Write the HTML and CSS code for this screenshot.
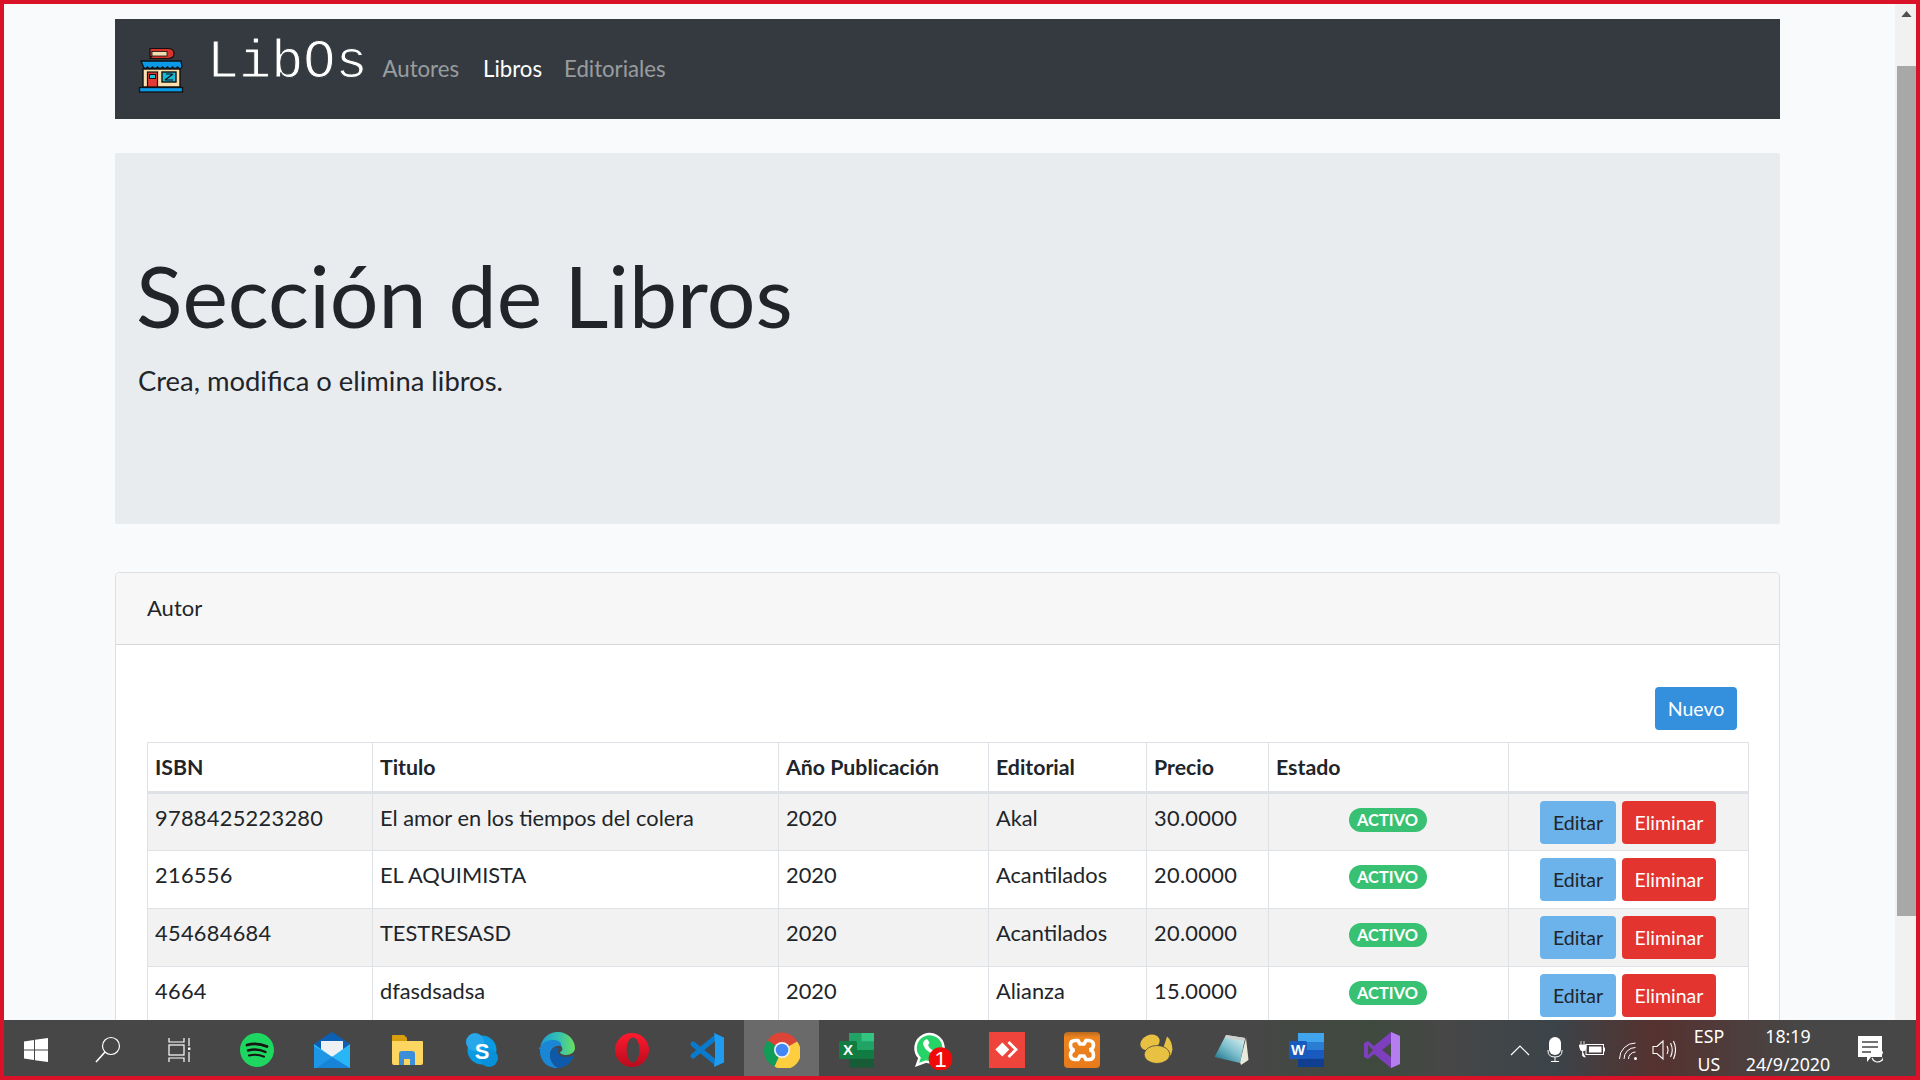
FILE: index.html
```html
<!DOCTYPE html>
<html lang="es">
<head>
<meta charset="utf-8">
<title>LibOs</title>
<link rel="stylesheet" href="styles.css">
</head>
<body>
<div class="screen">
  <div class="browser">
    <main class="page">
      <nav class="navbar">
        <svg class="logo" viewBox="0 0 46 46">
          <path d="M12 1.500h18q6 0 6 5t-6 5H12l1.500-2H12z" fill="#d8342c" stroke="#111" stroke-width="1.200"/>
          <rect x="14" y="4.500" width="15" height="4.500" fill="#f5deb3" stroke="#111" stroke-width=".8"/>
          <rect x="5" y="22" width="37" height="18" fill="#fbe0ae" stroke="#111" stroke-width="1.400"/>
          <path d="M3 14h40l1 6q-2 3-4.500 0q-2.500 3-5 0q-2.500 3-5 0q-2.500 3-5 0q-2.500 3-5 0q-2.500 3-5 0q-2.500 3-5 0q-2.500 3-4 0z" fill="#0a9ae8" stroke="#111" stroke-width="1.300"/>
          <rect x="9.500" y="25" width="10" height="15" fill="#e53935" stroke="#111" stroke-width="1.200"/>
          <rect x="11.500" y="27.500" width="6" height="4" fill="#1ec3d8" stroke="#111"/>
          <rect x="24" y="25" width="14" height="10" fill="#19b8d6" stroke="#111" stroke-width="1.400"/>
          <path d="M27 33l8-6M28 27h6M27 33h8" stroke="#111" stroke-width="1.200" fill="none"/>
          <rect x="1.500" y="40.500" width="43" height="4.500" fill="#0a9ae8" stroke="#111" stroke-width="1.300"/>
        </svg>
        <a class="brand">LibOs</a>
        <a class="nav-link">Autores</a>
        <a class="nav-link active">Libros</a>
        <a class="nav-link">Editoriales</a>
      </nav>

      <section class="jumbotron">
        <h1 class="display">Sección de Libros</h1>
        <p class="lead">Crea, modifica o elimina libros.</p>
      </section>

      <section class="card">
        <header class="card-header">Autor</header>
        <div class="card-body">
          <div class="actions"><button class="btn btn-primary">Nuevo</button></div>
          <table class="table">
            <colgroup>
              <col class="c1"><col class="c2"><col class="c3"><col class="c4"><col class="c5"><col class="c6"><col class="c7">
            </colgroup>
            <thead>
              <tr><th>ISBN</th><th>Titulo</th><th>Año Publicación</th><th>Editorial</th><th>Precio</th><th>Estado</th><th></th></tr>
            </thead>
            <tbody>
              <tr>
                <td class="num">9788425223280</td><td>El amor en los tiempos del colera</td><td>2020</td><td>Akal</td><td class="num">30.0000</td>
                <td class="center"><span class="badge">ACTIVO</span></td>
                <td class="ops"><button class="btn btn-info">Editar</button><button class="btn btn-danger">Eliminar</button></td>
              </tr>
              <tr>
                <td class="num">216556</td><td>EL AQUIMISTA</td><td>2020</td><td>Acantilados</td><td class="num">20.0000</td>
                <td class="center"><span class="badge">ACTIVO</span></td>
                <td class="ops"><button class="btn btn-info">Editar</button><button class="btn btn-danger">Eliminar</button></td>
              </tr>
              <tr>
                <td class="num">454684684</td><td>TESTRESASD</td><td>2020</td><td>Acantilados</td><td class="num">20.0000</td>
                <td class="center"><span class="badge">ACTIVO</span></td>
                <td class="ops"><button class="btn btn-info">Editar</button><button class="btn btn-danger">Eliminar</button></td>
              </tr>
              <tr>
                <td class="num">4664</td><td>dfasdsadsa</td><td>2020</td><td>Alianza</td><td class="num">15.0000</td>
                <td class="center"><span class="badge">ACTIVO</span></td>
                <td class="ops"><button class="btn btn-info">Editar</button><button class="btn btn-danger">Eliminar</button></td>
              </tr>
            </tbody>
          </table>
        </div>
      </section>
    </main>
    <aside class="scrollbar">
      <svg class="scroll-arrow" viewBox="0 0 12 7"><path d="M6 0l6 7H0z" fill="#505050"/></svg>
      <div class="scroll-thumb"></div>
    </aside>
  </div>

  <footer class="taskbar">
    <div class="slot slot-start">
      <svg class="ic" viewBox="0 0 36 36"><path d="M6 9.500l10-1.500v9.500H6zM17 7.800L30 6v11.500H17zM6 18.500h10V28L6 26.500zM17 18.500h13V30l-13-1.800z" fill="#fff"/></svg>
    </div>
    <div class="slot slot-sys">
      <svg class="ic" viewBox="0 0 36 36"><circle cx="21" cy="14" r="8.500" fill="none" stroke="#fff" stroke-width="1.200"/><path d="M15 20L6 30" stroke="#fff" stroke-width="1.600"/></svg>
    </div>
    <div class="slot slot-sys">
      <svg class="ic" viewBox="0 0 36 36" fill="none" stroke="#fff" stroke-width="1.200"><path d="M7 6v4h15V6M7 30v-4h15v4"/><rect x="7" y="13" width="15" height="10"/><path d="M27 6v8M27 20v10"/><rect x="26" y="15.500" width="2.400" height="2.400" fill="#fff" stroke="none"/></svg>
    </div>
    <div class="apps">
      <div class="slot"><svg class="ic" viewBox="0 0 36 36"><circle cx="18" cy="18" r="17" fill="#1ed760"/><g fill="none" stroke="#191414" stroke-linecap="round"><path d="M8 13q10-3 20 1.500" stroke-width="2.800"/><path d="M9 18.500q9-2.500 17.500 1.500" stroke-width="2.400"/><path d="M10 23.500q8-2 15 1.200" stroke-width="2"/></g></svg></div>
      <div class="slot"><svg class="ic" viewBox="0 0 36 36"><path d="M18 0L36 12v6H0v-6z" fill="#0b5fb5"/><path d="M7 9h22v11L18 25 7 20z" fill="#eef1f4"/><path d="M0 12l18 13 18-13v24H0z" fill="#29b6f6"/><path d="M0 14l18 11L2 36H0z" fill="#1e96e6"/><path d="M18 25l18 11H2z" fill="#1784d8"/></svg></div>
      <div class="slot"><svg class="ic" viewBox="0 0 36 36"><path d="M3 4q0-1 1-1h11l3 3v5H3z" fill="#d99e0b"/><path d="M3 9h30q1 0 1 1v21q0 2-2 2H5q-2 0-2-2z" fill="#fcd661"/><path d="M10 22q0-3 3-3h10q3 0 3 3v11h-5v-6h-6v6h-5z" fill="#3a8fd8"/></svg></div>
      <div class="slot"><svg class="ic" viewBox="0 0 36 36"><circle cx="18" cy="18" r="14.500" fill="#0a9be3"/><circle cx="11" cy="10" r="9" fill="#28a8ea"/><circle cx="25" cy="26" r="9" fill="#0691da"/><text x="18" y="27" class="glyph-s">S</text></svg></div>
      <div class="slot">
        <svg class="ic" viewBox="0 0 36 36">
          <defs><linearGradient id="edgeTop" x1="0" x2="1" y1="0" y2="0"><stop offset="0" stop-color="#1c9bd8"/><stop offset=".55" stop-color="#35c1b0"/><stop offset="1" stop-color="#6adf5f"/></linearGradient></defs>
          <path d="M1 17C2 7 9 0 19 0c10 0 17 8 17 16 0 4-4 7-9 7-3 0-6-1-6-3 3-1 3-4 1-6-4-4-13-4-18-1-2 1-4 2-4 4z" fill="url(#edgeTop)"/>
          <path d="M1 17C2 11 8 8 14 8c6 0 9 3 8 6-6-1-11 3-11 9 0 5 3 10 8 13C9 37 0 29 1 17z" fill="#1a86d6"/>
          <path d="M11 23c0-5 5-8 9-7-3 4 0 9 7 9 2 0 6-1 8-2-2 8-9 13-16 13-5-3-8-8-8-13z" fill="#0f5aa8"/>
        </svg>
      </div>
      <div class="slot">
        <svg class="ic" viewBox="0 0 36 36">
          <defs><linearGradient id="operaG" x1="0" x2="0" y1="0" y2="1"><stop offset="0" stop-color="#ff1b2d"/><stop offset="1" stop-color="#b80b1e"/></linearGradient></defs>
          <ellipse cx="18" cy="18" rx="17" ry="17" fill="url(#operaG)"/>
          <ellipse cx="19" cy="18" rx="6.500" ry="12.500" fill="#474747"/>
        </svg>
      </div>
      <div class="slot">
        <svg class="ic" viewBox="0 0 36 36">
          <path d="M4 12l22 18M4 24L26 6" fill="none" stroke="#0a7acc" stroke-width="5" stroke-linecap="round"/>
          <path d="M25 1l10 4.500v25L25 35l1-9V10z" fill="#1f9cf0"/>
        </svg>
      </div>
      <div class="slot active"><svg class="ic" viewBox="0 0 36 36"><path d="M18 18L3.500 8.500A17 17 0 0 1 33 9.500z" fill="#db4437"/><path d="M18 18l-7.500 16.500A17 17 0 0 1 3.500 8.500z" fill="#0f9d58"/><path d="M18 18L33 9.500A17 17 0 0 1 10.500 34.500z" fill="#ffcd40"/><circle cx="18" cy="18" r="8" fill="#f1f1f1"/><circle cx="18" cy="18" r="6.300" fill="#4285f4"/></svg></div>
      <div class="slot"><svg class="ic" viewBox="0 0 36 36"><path d="M10 1h23q2 0 2 2v30q0 2-2 2H12q-2 0-2-2z" fill="#21a366"/><rect x="10" y="1" width="12.500" height="17" fill="#21a366"/><rect x="22.500" y="1" width="12.500" height="8.500" fill="#33c481"/><rect x="22.500" y="9.500" width="12.500" height="8.500" fill="#21a366"/><rect x="10" y="18" width="25" height="8.500" fill="#107c41"/><rect x="10" y="26.500" width="25" height="9" fill="#185c37"/><rect x="0" y="9" width="18" height="18" rx="1.500" fill="#107c41"/><text x="9" y="23" class="glyph-x">X</text></svg></div>
      <div class="slot">
        <svg class="ic wa" viewBox="0 0 44 40">
          <path d="M3 35l2.500-7.200A14 14 0 1 1 12 31.600z" fill="#25d366" stroke="#fff" stroke-width="2.500"/>
          <path d="M11 10q2-1.500 3 0l1.500 3-1.500 2q1.500 4 5.500 5.500l2-1.500 3 1.500q.5 2-1 3-3 2-7.500-1-6-3.500-7-9 0-2 2-3.500z" fill="#fff"/>
          <circle cx="26.500" cy="29" r="11.800" fill="#f00a0a"/>
          <text x="26.500" y="36.500" class="glyph-one">1</text>
        </svg>
      </div>
      <div class="slot"><svg class="ic" viewBox="0 0 36 36"><rect width="36" height="36" fill="#ef443b"/><path d="M13.300 10.500l7 7-7 7-7-7z" fill="#fff"/><path d="M20.500 9L29 17.500 20.500 26l-2-2 6.500-6.500-6.500-6.500z" fill="#fff"/></svg></div>
      <div class="slot">
        <svg class="ic" viewBox="0 0 36 36">
          <defs><linearGradient id="xamppG" x1="0" x2="0" y1="0" y2="1"><stop offset="0" stop-color="#b9691f"/><stop offset=".15" stop-color="#ee8420"/><stop offset="1" stop-color="#e87a1a"/></linearGradient></defs>
          <rect width="36" height="36" rx="4" fill="url(#xamppG)"/>
          <path d="M14 8.500H11Q6.500 8.500 6.500 13T10.500 18Q6.500 19 6.500 23T11 27.500h3l2-3.500h4l2 3.500h3Q29.500 27.500 29.500 23T25.500 18Q29.500 17 29.500 13T25 8.500h-3L20 12h-4z" fill="none" stroke="#fff" stroke-width="3.600"/>
        </svg>
      </div>
      <div class="slot">
        <svg class="ic" viewBox="0 0 36 36">
          <ellipse cx="11" cy="10.500" rx="10" ry="7.500" fill="#e8c142" transform="rotate(-25 11 10.500)"/>
          <path d="M24 17L28 4.500q5 4 5.500 13-1 5-3 7.500-1-6-6.500-8z" fill="#e8c142"/>
          <ellipse cx="18" cy="22.500" rx="12.800" ry="9" fill="#e8c142" stroke="#474747" stroke-width=".8"/>
        </svg>
      </div>
      <div class="slot">
        <svg class="ic" viewBox="0 0 36 36">
          <defs><linearGradient id="padG" x1=".9" x2=".1" y1="0" y2="1"><stop offset="0" stop-color="#e2f4f6"/><stop offset=".5" stop-color="#7fc0cd"/><stop offset="1" stop-color="#17718a"/></linearGradient></defs>
          <path d="M32 6l2.500 22-7.500 5-1-3z" fill="#e9e9dc"/>
          <path d="M12 3l19 3-5 25L.5 25z" fill="url(#padG)"/>
          <path d="M12 3l19 3-.7 3-19.300-3z" fill="#cfcfcf"/>
        </svg>
      </div>
      <div class="slot"><svg class="ic" viewBox="0 0 36 36"><rect x="9" y="1" width="26" height="34" rx="2" fill="#2b7cd3"/><rect x="9" y="1" width="26" height="9" fill="#41a5ee"/><rect x="9" y="18" width="26" height="8.500" fill="#185abd"/><rect x="9" y="26.500" width="26" height="8.500" fill="#103f91"/><rect x="0" y="9" width="18" height="18" rx="1.500" fill="#185abd"/><text x="9" y="23" class="glyph-x">W</text></svg></div>
      <div class="slot"><svg class="ic" viewBox="0 0 36 36"><path d="M27 0l9 4v28l-9 4-17-14-6 5-4-2V11l4-2 6 5z" fill="#7e3fbf"/><path d="M27 0l9 4v28l-9 4z" fill="#b47ef0"/><path d="M27 11l-9 7 9 7zM4 13v10l5-5z" fill="#454a45"/></svg></div>
    </div>
    <div class="tray">
      <div class="t t-chev"><svg class="tray-ic" viewBox="0 0 24 24"><path d="M3 17l9-9 9 9" fill="none" stroke="#fff" stroke-width="1.200"/></svg></div>
      <div class="t t-mic"><svg class="mic" viewBox="0 0 16 26"><rect x="2" y="0" width="12" height="18" rx="6" fill="#fff"/><path d="M1 13v1q0 6 7 6t7-6v-1M8 20v4M4 24.500h8" fill="none" stroke="#fff" stroke-width="1"/></svg></div>
      <div class="t t-bat"><svg class="bat" viewBox="0 0 26 20"><path d="M2 1v4M5 1v4M0 5h7v3q0 3-3 3t-3-3zM3.500 11v4q0 2 3 2" fill="#fff" stroke="#fff" stroke-width=".8"/><rect x="7" y="4.500" width="17.500" height="10" fill="none" stroke="#fff"/><rect x="10" y="6.500" width="12.500" height="6" fill="#fff"/><rect x="25" y="7.500" width="1" height="4" fill="#fff"/></svg></div>
      <div class="t t-wifi"><svg class="tray-ic" viewBox="0 0 24 24" fill="none" stroke="#fff" stroke-width="1"><path d="M2.500 21A16 16 0 0 1 18.500 5"/><path d="M7 21A11.500 11.500 0 0 1 18.500 9.500"/><path d="M11.500 21A7 7 0 0 1 18.500 14"/><circle cx="18.500" cy="20.500" r="1.500" fill="#fff" stroke="none"/></svg></div>
      <div class="t t-vol"><svg class="tray-ic" viewBox="0 0 24 24" fill="none" stroke="#fff" stroke-width="1.100"><path d="M1 8.500h4l6-5.500v18l-6-5.500H1z"/><path d="M15 8q2 4 0 8M18.500 5q3.500 7 0 14M21.500 3q4 9 0 18"/></svg></div>
      <div class="t t-lang"><span>ESP</span><span>US</span></div>
      <div class="t t-clock"><span>18:19</span><span>24/9/2020</span></div>
      <div class="t t-notif"><svg class="notif" viewBox="0 0 26 30"><path d="M1 1h24v21H14l-4 5v-5H1z" fill="#fff"/><path d="M5 7h16M5 12h16M5 17h9" stroke="#454545" stroke-width="1.500"/><path d="M15 23a6 6 0 1 0 9-7" fill="none" stroke="#fff" stroke-width="1.200"/></svg></div>
    </div>
  </footer>
</div>
</body>
</html>
```

FILE: styles.css
```css
* { box-sizing: border-box; }

html, body {
  margin: 0;
  height: 100%;
  overflow: hidden;
}

body {
  font-family: "Lato", "Noto Sans", sans-serif;
  font-size: 21.800px;
  color: #212529;
}

.screen {
  width: 1920px;
  height: 1080px;
  border: 4px solid #da1228;
  display: flex;
  flex-direction: column;
}

.browser {
  flex: 1;
  min-height: 0;
  display: flex;
  overflow: hidden;
  background: #f8fafc;
}

.page {
  flex: 1;
  min-width: 0;
  padding: 15px 0 0 111px;
}

.scrollbar {
  width: 21px;
  background: #f1f1f1;
  display: flex;
  flex-direction: column;
  align-items: center;
  padding: 7px 0 0 2px;
}

.scroll-arrow {
  width: 11px;
  height: 6px;
}

.scroll-thumb {
  width: 19px;
  height: 850px;
  margin-top: 49px;
  background: #a8a8a8;
}

/* navbar */
.navbar {
  width: 1665px;
  height: 100px;
  background: #343a40;
  display: flex;
  align-items: center;
  padding-left: 23px;
}

.logo {
  width: 46px;
  height: 46px;
  margin-top: 2px;
}

.brand {
  font-family: "Liberation Mono", monospace;
  font-size: 53.500px;
  color: #fff;
  -webkit-text-stroke: 1px #343a40;
  margin-left: 23px;
  margin-top: -13px;
}

.nav-link {
  color: rgba(255, 255, 255, .5);
  font-size: 22.200px;
  margin-left: 15px;
  margin-top: -2px;
}

.nav-link.active {
  color: #fff;
  margin-left: 24px;
  margin-right: 7px;
}

/* jumbotron */
.jumbotron {
  width: 1665px;
  height: 371px;
  margin-top: 34px;
  background: #e9ecef;
  padding: 90px 23px 0;
  border-radius: 2px;
}

.display {
  margin: 0 0 0 -2px;
  font-size: 86px;
  font-weight: 400;
  line-height: 104px;
  color: #212529;
}

.lead {
  margin: 15px 0 0;
  font-size: 27.400px;
  line-height: 1.4;
}

/* card */
.card {
  width: 1665px;
  margin-top: 48px;
  background: #fff;
  border: 1px solid rgba(0, 0, 0, .125);
  border-radius: 5px;
  height: 700px;
}

.card-header {
  height: 72px;
  padding: 0 31px 2px;
  background: #f7f7f7;
  border-bottom: 1px solid rgba(0, 0, 0, .125);
  display: flex;
  align-items: center;
  font-size: 22px;
  border-radius: 5px 5px 0 0;
}

.card-body {
  padding: 42px 31px 0;
}

.actions {
  display: flex;
  justify-content: flex-end;
  padding-right: 11px;
  margin-bottom: 12px;
}

.btn {
  border: 0;
  border-radius: 4px;
  font-family: inherit;
  font-size: 19.500px;
  height: 43px;
  padding: 0;
}

.btn-primary { width: 82px; background: #3490dc; color: #fff; }
.btn-info { width: 76px; background: #6cb2eb; color: #212529; }
.btn-danger { width: 94px; margin-left: 6px; background: #e3342f; color: #fff; }

/* table */
.table {
  width: 1601px;
  table-layout: fixed;
  border-collapse: collapse;
}

.c1 { width: 225px; }
.c2 { width: 406px; }
.c3 { width: 210px; }
.c4 { width: 158px; }
.c5 { width: 122px; }
.c6 { width: 240px; }
.c7 { width: 240px; }

.table th,
.table td {
  border: 1px solid #dee2e6;
  padding: 8px 7px;
  text-align: left;
  vertical-align: top;
  line-height: 30px;
}

.table th {
  height: 50px;
  padding-top: 9px;
  border-bottom: 3px solid #dee2e6;
  font-weight: 700;
  font-size: 21.300px;
}

.table td { height: 58px; padding-top: 9px; }
.table td.num { letter-spacing: .3px; }

.table tbody tr:nth-child(odd) { background: #f2f2f2; }

.table td.center { text-align: center; padding-top: 14px; padding-left: 5px; }

.table td.ops {
  padding: 7px 0 0 31px;
  white-space: nowrap;
  line-height: 0;
}

.badge {
  display: inline-block;
  width: 78px;
  height: 24px;
  border-radius: 12px;
  background: #38c172;
  color: #fff;
  font-size: 16.400px;
  font-weight: 700;
  line-height: 24px;
  text-align: center;
  vertical-align: top;
}

/* taskbar */
.taskbar {
  height: 56px;
  flex: none;
  display: flex;
  background: linear-gradient(90deg, #474747 0, #474747 1240px, #3f4a3e 1370px, #474747 1440px, #3b4449 1550px, #55322f 1650px, #474747 1800px);
}

.slot {
  width: 75px;
  height: 56px;
  display: flex;
  align-items: center;
  justify-content: center;
  padding-top: 4px;
}

.slot.active { background: #6a6a6a; }

.slot-start { width: 64px; margin-right: 4px; }
.slot-sys { width: 72px; }

.apps {
  display: flex;
  margin-left: 3px;
}

.ic { width: 36px; height: 36px; display: block; }
.ic.wa { width: 44px; height: 40px; margin-left: 8px; }

.glyph-s { font: 700 22px "Liberation Sans", sans-serif; fill: #fff; text-anchor: middle; }
.glyph-x { font: 700 15px "Liberation Sans", sans-serif; fill: #fff; text-anchor: middle; }
.glyph-one { font: 400 22px "Liberation Sans", sans-serif; fill: #fff; text-anchor: middle; }

.tray {
  display: flex;
  margin-left: auto;
  padding-right: 15px;
  color: #fff;
}

.t {
  height: 56px;
  display: flex;
  align-items: center;
  justify-content: center;
}

.t-chev { width: 34px; padding-top: 4px; }
.t-mic { width: 36px; padding-top: 4px; }
.t-bat { width: 38px; padding-top: 4px; }
.t-wifi { width: 36px; padding-top: 4px; }
.t-vol { width: 34px; padding-top: 4px; }

.tray-ic { width: 24px; height: 24px; }
.mic { width: 16px; height: 26px; }
.bat { width: 26px; height: 20px; }
.notif { width: 26px; height: 30px; }

.t-lang, .t-clock {
  flex-direction: column;
  justify-content: flex-start;
  font-family: "Noto Sans", sans-serif;
  font-size: 17.800px;
  line-height: 28px;
  padding-top: 2px;
}

.t-lang { width: 56px; }
.t-clock { width: 102px; }
.t-notif { width: 62px; padding-top: 4px; }
```
